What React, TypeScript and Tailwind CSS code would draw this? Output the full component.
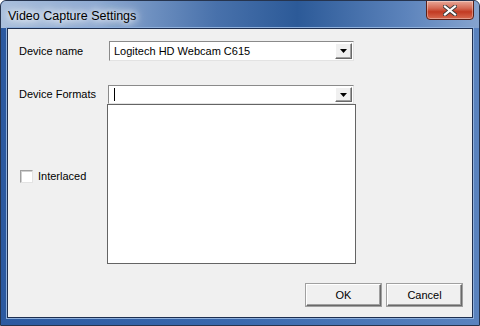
import React from 'react'

const font = { fontFamily: '"Liberation Sans", Arial, sans-serif' }

function DropArrow() {
    return (
        <div className="w-[17px] h-full flex items-center justify-center bg-[#f0f0f0] border-t border-l border-t-white border-l-white border-r border-b border-r-[#696969] border-b-[#696969] shadow-[inset_-1px_-1px_0_#a0a0a0]">
            <svg width="7" height="4" viewBox="0 0 7 4">
                <path d="M0 0 H7 L3.5 4 Z" fill="#000" />
            </svg>
        </div>
    )
}

function ComboBox({ text, caret, className }: { text?: string; caret?: boolean; className: string }) {
    return (
        <div className={`flex bg-white border border-t-[#8a8a8a] border-l-[#8a8a8a] border-r-[#e3e3e3] border-b-[#e3e3e3] p-[1px] ${className}`}>
            <div className="flex-1 flex items-center pl-[3px] text-[11px] text-black">
                {caret && <span className="w-px h-[13px] bg-black ml-px" />}
                {text}
            </div>
            <DropArrow />
        </div>
    )
}

function Win7Button({ label }: { label: string }) {
    return (
        <button className="w-[75px] h-[22px] bg-[#f0f0f0] text-[11px] text-black border border-t-white border-l-white border-r-[#696969] border-b-[#696969] shadow-[inset_-1px_-1px_0_#a0a0a0,0_0_0_1px_#a0a0a0]">
            {label}
        </button>
    )
}

export default function App() {
    return (
        <div className="w-[480px] h-[326px] bg-white" style={font}>
            <div className="w-full h-full flex flex-col rounded-t-[6px] overflow-hidden border border-[#26344e] bg-[linear-gradient(90deg,#2b59a0_0%,#3a69ae_50%,#5a83bf_100%)]">
                {/* title bar */}
                <div className="h-[27px] flex items-start justify-between shrink-0 bg-[linear-gradient(90deg,#a9bfdc_0%,#8eaad2_20%,#4871ab_45%,#2c5a98_62%,#5d84bc_85%,#86a4cf_100%)]">
                    <span className="pl-[7px] pt-[6px] text-[12.5px] text-black [text-shadow:0_0_6px_#ffffff,0_0_10px_#ffffff,0_0_14px_#ffffff]">
                        Video Capture Settings
                    </span>
                    <div className="mr-[5px] mt-[-1px] w-[48px] h-[20px] rounded-b-[4px] border border-[#5a2018] bg-[linear-gradient(180deg,#e8a898_0%,#d46a55_40%,#c23a22_60%,#d86a50_100%)] flex items-center justify-center shadow-[inset_0_0_0_1px_rgba(255,255,255,0.35)]">
                        <svg width="14" height="11" viewBox="0 0 14 11">
                            <path d="M2 1.5 L12 9.5 M12 1.5 L2 9.5" stroke="#3a3a3a" strokeWidth="4" strokeLinecap="square" />
                            <path d="M2 1.5 L12 9.5 M12 1.5 L2 9.5" stroke="#ffffff" strokeWidth="2.2" strokeLinecap="square" />
                        </svg>
                    </div>
                </div>

                {/* client area */}
                <div className="flex-1 mx-[6px] mb-[7px] border border-[#1e2f50] bg-[#f0f0f0] flex flex-col text-[11px] text-black shadow-[0_0_0_1px_#8fb0dc]">
                    <div className="grid grid-cols-[90px_auto] pl-[11px] pt-[12px]">
                        <div className="flex items-center h-[20px]">Device name</div>
                        <ComboBox text="Logitech HD Webcam C615" className="w-[245px] h-[20px]" />

                        <div className="flex items-center h-[19px] mt-[24px]">Device Formats</div>
                        <ComboBox caret className="w-[246px] h-[19px] mt-[24px] ml-[-1px]" />

                        <div className="pt-[64px] pl-px">
                            <label className="flex items-center gap-[5px]">
                                <span className="w-[13px] h-[13px] bg-white border border-t-[#a0a0a0] border-l-[#a0a0a0] border-r-[#e3e3e3] border-b-[#e3e3e3] shadow-[inset_1px_1px_0_#d0d0d0]" />
                                <span>Interlaced</span>
                            </label>
                        </div>
                        <div className="w-[249px] h-[160px] ml-[-2px] bg-white border border-[#646464]" />
                    </div>

                    <div className="mt-auto mb-[11px] pr-[10px] flex justify-end gap-[6px]">
                        <Win7Button label="OK" />
                        <Win7Button label="Cancel" />
                    </div>
                </div>
            </div>
        </div>
    )
}
